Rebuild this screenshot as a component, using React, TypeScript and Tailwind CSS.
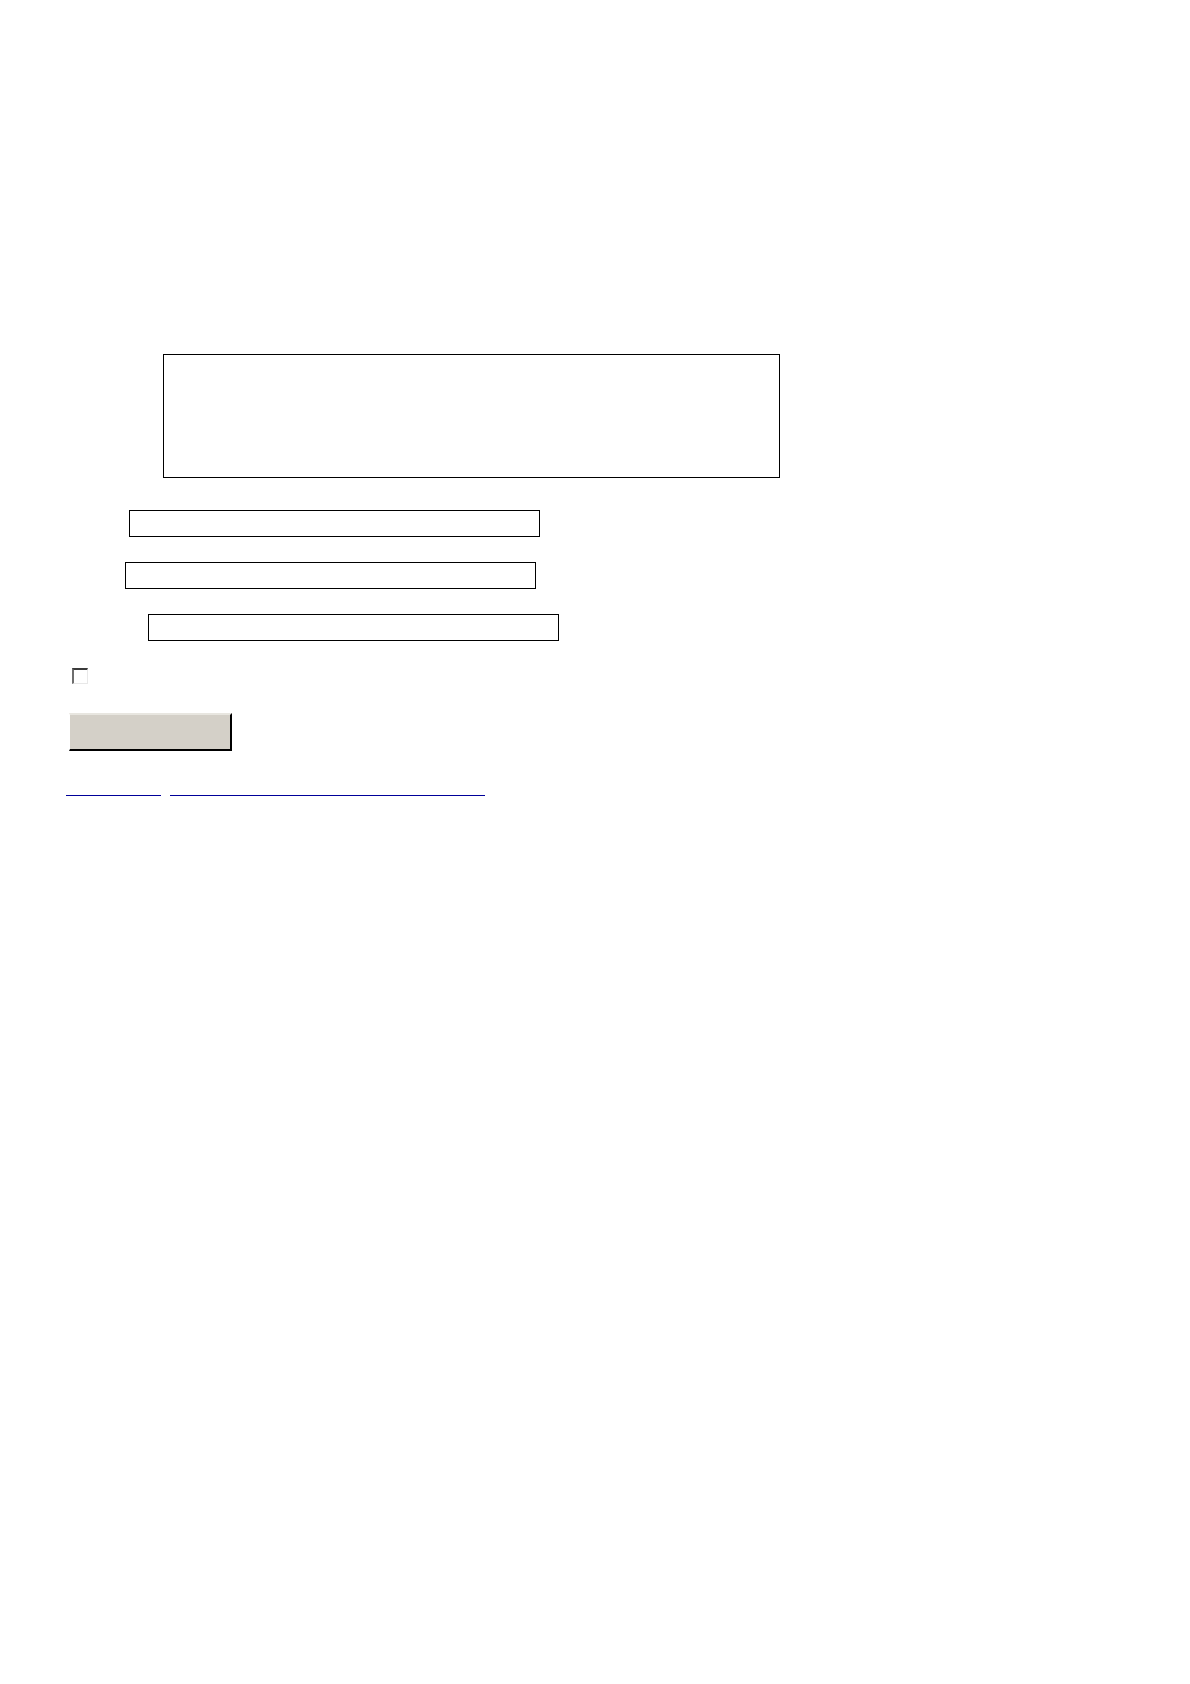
import React from 'react';

const fieldClass = 'block h-[27px] w-[411px] border border-black bg-white outline-none';

export default function App() {
  return (
    <div className="min-h-[1684px] w-full bg-white pl-[66px] pt-[354px] font-['Liberation_Sans',Arial,sans-serif] text-[13px]">
      <form className="flex flex-col items-start" onSubmit={(e) => e.preventDefault()}>
        <textarea
          aria-label="message"
          className="ml-[97px] block h-[124px] w-[617px] resize-none border border-black bg-white outline-none"
        />
        <input aria-label="name" type="text" className={`${fieldClass} ml-[63px] mt-[32px]`} />
        <input aria-label="email" type="text" className={`${fieldClass} ml-[59px] mt-[25px]`} />
        <input aria-label="subject" type="text" className={`${fieldClass} ml-[82px] mt-[25px]`} />

        <label className="ml-[6px] mt-[27px] flex items-center">
          <span className="block h-[16px] w-[16px] border-l-2 border-t-2 border-r border-b border-l-[#6e6e6e] border-t-[#3a3a3a] border-r-[#e8e8e8] border-b-[#e8e8e8] bg-white" />
        </label>

        <button
          type="submit"
          className="ml-[3px] mt-[29px] h-[38px] w-[163px] border-b-2 border-l border-r-2 border-t-2 border-b-black border-l-[#ffffff] border-r-black border-t-[#e8e6e0] bg-[#d4d0c8]"
        />

        <div className="mt-[36px] flex items-end gap-[9px]">
          <a href="#" className="block h-[9px] w-[95px] border-b-[1.5px] border-[#000099]" />
          <a href="#" className="block h-[9px] w-[315px] border-b-[1.5px] border-[#000099]" />
        </div>
      </form>
    </div>
  );
}
